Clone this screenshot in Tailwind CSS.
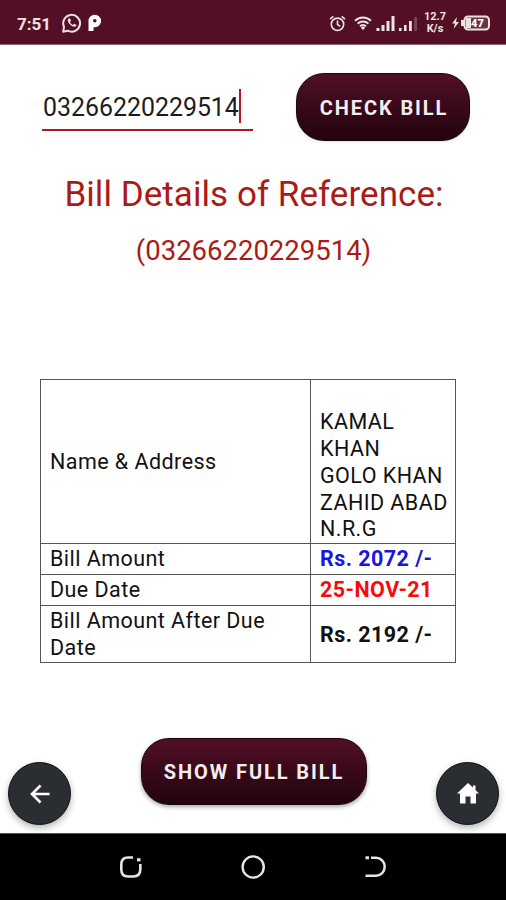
<!DOCTYPE html>
<html lang="en">
<head>
  <meta charset="UTF-8" />
  <meta name="viewport" content="width=device-width, initial-scale=1.0" />
  <title>Bill Details</title>
  <script src="https://cdn.jsdelivr.net/npm/@tailwindcss/browser@4"></script>
</head>
<body class="bg-white font-[Roboto,sans-serif] text-[#111]">
  <div class="w-[506px] h-[900px] flex flex-col overflow-hidden">

    <!-- Status bar -->
    <header class="h-[45px] shrink-0 bg-[#520f26] border-b border-[#8a6a70] flex items-center pl-[17px] pr-[16px] pt-[2px] text-[#eee3e1]">
      <span class="text-[17px] font-bold leading-none w-[45px] pt-[2px]">7:51</span>
      <svg class="w-5 h-5" viewBox="0 0 20 20" fill="none" stroke="currentColor">
        <path d="M1.2 18.8l.8-5a8.4 8.4 0 1 1 3.7 3.9z" stroke-width="2" stroke-linejoin="round" />
        <path d="M6.6 5.4c-1.6 1.4-.6 4 1.5 6.1s4.9 3.2 6.3 1.3l-.2-1-2-1-1.2 1.2c-1.5-.6-2.4-1.6-3-2.9l1-1.2-.8-2.3z" fill="currentColor" stroke="none" />
      </svg>
      <svg class="ml-[6px] w-[14px] h-[18px]" viewBox="0 0 14 18">
        <path d="M.5 17V7a6.300 6.300 0 1 1 6.500 6.300H5.500V17z" fill="#fff" />
        <circle cx="6.8" cy="6.8" r="1.8" fill="#520f26" />
      </svg>

      <div class="ml-auto flex items-center">
        <svg class="w-[17px] h-[17px]" viewBox="0 0 17 17" fill="none" stroke="currentColor" stroke-width="1.6">
          <circle cx="8.5" cy="9.3" r="6.2" />
          <path d="M8.5 5.6v4l2.7 1.6M1 4.2l3.3-2.9M16 4.2l-3.3-2.9" />
        </svg>
        <svg class="ml-[8px] w-[18px] h-[14px]" viewBox="0 0 18 14" fill="none" stroke="currentColor" stroke-width="2">
          <path d="M1 4.700a11.500 11.500 0 0 1 16 0M3.600 7.600a7.800 7.800 0 0 1 10.800 0M6 10.300a4.300 4.300 0 0 1 6 0" />
          <path d="M9 14l-2.200-2.300a3 3 0 0 1 4.400 0z" fill="currentColor" stroke="none" />
        </svg>
        <svg class="ml-[4px] w-[19px] h-[15px]" viewBox="0 0 19 15" fill="currentColor">
          <path d="M.5 12h3v3h-3zM5.500 9h3v6h-3zM10.500 5h3v10h-3zM15.500 0h3v15h-3z" />
        </svg>
        <svg class="ml-[4px] w-[18px] h-[15px]" viewBox="0 0 18 15" fill="currentColor">
          <path d="M0 12h2.600v3H0zM5 9h2.600v6H5zM10 5h2.800v10H10z" />
          <path d="M15.200 1H18v14h-2.800z" opacity=".25" />
        </svg>
        <div class="ml-[6px] w-[24px] text-center text-[11px] leading-[12px] font-bold">12.7<br>K/s</div>
        <svg class="ml-[5px] w-[38px] h-[16px]" viewBox="0 0 38 16">
          <path d="M5 2L0 8.500h3L1.600 14 7 7H4z" fill="currentColor" />
          <rect x="9" y="5" width="3" height="6" fill="currentColor" />
          <rect x="12.5" y="1.5" width="24.5" height="13" rx="3.5" fill="#6b3342" stroke="currentColor" stroke-width="2" />
          <rect x="14" y="3" width="5" height="10" fill="currentColor" />
          <text x="25.5" y="12" text-anchor="middle" font-family="Roboto" font-weight="900" font-size="11" fill="#fff">47</text>
        </svg>
      </div>
    </header>

    <main class="flex-1 flex flex-col">
      <!-- Reference number + check button -->
      <div class="flex justify-between items-start pl-[42px] pr-[36px] pt-[28px]">
        <div class="mt-[16px] w-[211px] h-[42px] border-b-2 border-[#b5161f] flex items-start">
          <span class="pl-px pt-px text-[24.9px] leading-[36px] text-[#1c1c1c]">03266220229514</span>
          <span class="w-[2px] h-[34px] bg-[#b5161f]"></span>
        </div>
        <button class="w-[174px] h-[68px] rounded-[28px] border border-[#1c070d] bg-linear-to-b from-[#520f26] to-[#22040e] text-[#f3eeee] text-[20px] font-bold tracking-[1.9px] pl-[2px] pt-[2px] shadow-sm">CHECK BILL</button>
      </div>

      <h1 class="mt-[30px] pl-[2px] text-center text-[35px] leading-[48px] tracking-[0.05px] text-[#ab1a16]">Bill Details of Reference:</h1>
      <h2 class="mt-[12px] pl-[1px] text-center text-[27.5px] leading-[40px] text-[#ab1a16]">(03266220229514)</h2>

      <!-- Bill table -->
      <table class="ml-[40px] mt-[108px] w-[416px] table-fixed border-collapse text-[21.5px] leading-[26.7px] tracking-[0.45px]">
        <colgroup>
          <col class="w-[270px]" />
          <col />
        </colgroup>
        <tbody>
          <tr class="h-[164px]">
            <td class="border border-[#555] pl-[9px] pt-px align-middle">Name &amp; Address</td>
            <td class="border border-[#555] pl-[9px] align-bottom whitespace-nowrap">KAMAL<br>KHAN<br>GOLO KHAN<br>ZAHID ABAD<br>N.R.G</td>
          </tr>
          <tr class="h-[31px]">
            <td class="border border-[#555] pl-[9px] pt-px">Bill Amount</td>
            <td class="border border-[#555] pl-[9px] pt-px font-bold text-[#1a16e0]">Rs. 2072 /-</td>
          </tr>
          <tr class="h-[31px]">
            <td class="border border-[#555] pl-[9px] pt-px">Due Date</td>
            <td class="border border-[#555] pl-[9px] pt-px font-bold text-[#f90a0a]">25-NOV-21</td>
          </tr>
          <tr class="h-[57px]">
            <td class="border border-[#555] pl-[9px] pt-[2px]">Bill Amount After Due Date</td>
            <td class="border border-[#555] pl-[9px] pt-[2px] font-bold">Rs. 2192 /-</td>
          </tr>
        </tbody>
      </table>

      <!-- Bottom actions -->
      <div class="mt-auto flex items-end justify-between pl-[8px] pr-[7px] pb-[8px]">
        <button class="w-[63px] h-[63px] rounded-full bg-[#2a2d32] border border-[#111] shadow-[0_3px_7px_rgba(0,0,0,0.3)] flex items-center justify-center">
          <svg class="w-[20px] h-[20px]" viewBox="0 0 20 20" fill="none" stroke="#fff" stroke-width="2.6">
            <path d="M19.5 10H2M10.5 1.5L2 10l8.5 8.5" />
          </svg>
        </button>
        <button class="mb-[20px] w-[226px] h-[67px] rounded-[28px] border border-[#1c070d] bg-linear-to-b from-[#520f26] to-[#22040e] text-[#f3eeee] text-[20px] font-bold tracking-[1.9px] pl-px pt-px shadow-[0_2px_4px_rgba(0,0,0,0.35)]">SHOW FULL BILL</button>
        <button class="w-[63px] h-[63px] rounded-full bg-[#2a2d32] border border-[#111] shadow-[0_3px_7px_rgba(0,0,0,0.3)] flex items-center justify-center">
          <svg class="w-[22px] h-[21px]" viewBox="0 0 22 21" fill="#fff">
            <path d="M11 0L0 10.5h3V20.500h5.500v-7h5v7h5.500v-10h3L18.500 7V2.500h-2.500v2z" />
          </svg>
        </button>
      </div>
    </main>

    <!-- System navigation -->
    <nav class="h-[67px] shrink-0 bg-black border-t border-[#555] flex items-center justify-between px-[119px] text-[#e6e6e6]">
      <svg class="w-[24px] h-[24px]" viewBox="0 0 24 24" fill="none" stroke="currentColor" stroke-width="2.6">
        <path d="M14 2.5H9Q2.3 2.5 2.3 9.5v5Q2.3 21.5 9 21.5h5Q21.3 21.5 21.3 14.5V9" />
        <path d="M18 4.8h3.5" stroke-width="3.2" />
      </svg>
      <svg class="w-[24px] h-[24px]" viewBox="0 0 24 24" fill="none" stroke="currentColor" stroke-width="2.4">
        <circle cx="12.2" cy="12" r="10.6" />
      </svg>
      <svg class="w-[24px] h-[24px]" viewBox="0 0 24 24" fill="none" stroke="currentColor" stroke-width="2.5">
        <path d="M8 2.800h5a8.700 9 0 0 1 0 18H2.500" />
        <path d="M2.500 2.800h3.500" stroke-width="3" />
      </svg>
    </nav>
  </div>
</body>
</html>
